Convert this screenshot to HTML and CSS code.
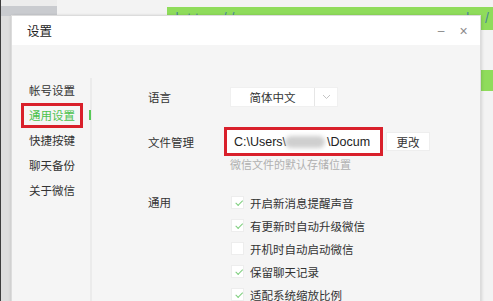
FILE: index.html
```html
<!DOCTYPE html>
<html lang="zh-CN">
<head>
<meta charset="utf-8">
<link rel="stylesheet" href="styles.css">
</head>
<body>
<div class="screen">
  <div class="bg">
    <div class="bg-dark"></div>
    <div class="bg-left"><div class="bg-left-top"></div><div class="bg-left-bar"></div></div>
    <div class="bg-right">
      <div class="green-bar"><span class="url">http://www.xxxxxxxxxxxxxx.edu/</span></div>
      <div class="green-bar2"><span>/ev</span></div>
    </div>
  </div>

  <div class="dialog">
    <div class="titlebar">
      <span class="title">设置</span>
      <span class="controls"><span class="min">–</span><span class="close">×</span></span>
    </div>
    <div class="dbody">
      <ul class="nav">
        <li class="nav-item">帐号设置</li>
        <li class="nav-item active">通用设置</li>
        <li class="nav-item">快捷按键</li>
        <li class="nav-item">聊天备份</li>
        <li class="nav-item">关于微信</li>
      </ul>
      <div class="content">
        <div class="row row-lang">
          <div class="label">语言</div>
          <div class="select">
            <span class="select-val">简体中文</span>
            <span class="select-arrow"><svg width="9" height="6" viewBox="0 0 9 6"><path d="M1 1l3.5 3.5L8 1" fill="none" stroke="#c4c4c4" stroke-width="1"/></svg></span>
          </div>
        </div>
        <div class="row row-file">
          <div class="label">文件管理</div>
          <div class="path"><span>C:\Users\</span><span class="blur"></span><span>\Docum</span></div>
          <button class="btn">更改</button>
        </div>
        <div class="hint">微信文件的默认存储位置</div>
        <div class="row row-general">
          <div class="label">通用</div>
          <div class="checks">
            <div class="check"><span class="box on"></span>开启新消息提醒声音</div>
            <div class="check"><span class="box on"></span>有更新时自动升级微信</div>
            <div class="check"><span class="box"></span>开机时自动启动微信</div>
            <div class="check"><span class="box on"></span>保留聊天记录</div>
            <div class="check"><span class="box on"></span>适配系统缩放比例</div>
          </div>
        </div>
      </div>
    </div>
  </div>
</div>
</body>
</html>
```
FILE: styles.css
```css
* { box-sizing: border-box; }
html, body { margin: 0; padding: 0; }
body {
  width: 493px; height: 301px; overflow: hidden;
  font-family: "Noto Sans CJK SC", "Liberation Sans", sans-serif;
  color: #333;
  background: #f3f3f3;
}
.screen { position: relative; width: 493px; height: 301px; overflow: hidden; }

.bg { display: flex; height: 301px; }
.bg-dark { width: 3px; background: #3d3d3d; }
.bg-left { width: 204px; background: #dedede; display: flex; flex-direction: column; }
.bg-left-top { height: 6px; background: #ececec; }
.bg-left-bar { height: 10px; background: #c9cbcf; }
.bg-right { flex: 1; background: #f3f3f3; display: flex; flex-direction: column; }
.green-bar {
  margin: 7px 0 0 110px; height: 23px; background: #8fdc5b;
  padding: 3px 0 0 8px; font-family: "Liberation Sans", sans-serif; font-size: 14px;
  color: #4a8a9a; white-space: nowrap; overflow: hidden; letter-spacing: 4px;
}
.green-bar2 {
  margin: 40px 0 0 273px; height: 21px; background: #8fdc5b;
  font-family: "Liberation Sans", sans-serif; font-size: 14px; color: #4a9aa8;
  padding: 2px 0 0 0; white-space: nowrap; overflow: hidden;
}
.green-bar2 span { margin-left: -4px; }

.dialog {
  position: absolute; left: 12px; top: 16px; width: 468px; height: 290px;
  background: #f5f5f5;
  box-shadow: 0 0 0 1px #dcdcdc, 2px 0 3px rgba(0,0,0,0.12), -1px 0 3px rgba(0,0,0,0.15);
  display: flex; flex-direction: column;
}
.titlebar {
  height: 29px; background: #fff; display: flex; align-items: center;
  justify-content: space-between; padding: 0 12px 0 15px;
}
.title { font-size: 12.5px; color: #222; }
.controls { display: flex; align-items: center; gap: 14px; color: #8a8a8a; font-family: "Liberation Sans", sans-serif; line-height: 14px; }
.min { font-size: 12px; width: 8px; text-align: center; }
.close { font-size: 14px; width: 9px; text-align: center; }

.dbody { flex: 1; display: flex; }
.nav {
  list-style: none; margin: 33px 0 0 0; padding: 0; width: 80px;
  border-right: 2px solid #ebebeb; position: relative; align-self: stretch;
}
.nav-item {
  height: 25px; line-height: 25px; font-size: 11.5px; padding-left: 17px; color: #333;
}
.nav-item.active {
  color: #4cc24c; margin-left: 9px; width: 62px; height: 25px;
  border: 3px solid #d9202b; padding-left: 5px; line-height: 19px;
  position: relative;
}
.nav-item.active::after {
  content: ""; position: absolute; right: -11px; top: 4px;
  width: 2px; height: 10px; background: #57c957;
}

.content { flex: 1; padding: 42px 0 0 56px; display: flex; flex-direction: column; }
.row { display: flex; align-items: center; }
.label { width: 82px; font-size: 11.5px; color: #333; }
.row-lang { height: 20px; }
.select {
  width: 108px; height: 20px; background: #fff; display: flex;
  border: 1px solid #f0f0f0;
}
.select-val { width: 84px; text-align: center; font-size: 11.5px; line-height: 18px; border-right: 1px solid #e6e6e6; }
.select-arrow { flex: 1; display: flex; align-items: center; justify-content: center; }

.row-file { margin-top: 20px; height: 29px; }
.row-file .label { width: 76px; }
.path {
  width: 159px; height: 29px; border: 3px solid #d9202b; background: #fff;
  padding: 0 2px 0 7px; display: flex; align-items: center; white-space: nowrap; overflow: hidden;
  font-family: "Liberation Sans", sans-serif; font-size: 12.5px; color: #222;
}
.path span { flex: none; }
.blur {
  width: 40px; height: 12px; margin: 0 2px 0 -1px; background: #cfcfcf;
  border-radius: 6px; filter: blur(2px);
}
.btn {
  margin-left: 3px; width: 44px; height: 19px; background: #fff; border: 1px solid #eeeeee;
  font-family: "Noto Sans CJK SC", sans-serif; font-size: 11.5px; color: #333; padding: 0;
}
.hint { margin: 1px 0 0 82px; font-size: 11px; color: #b0b0b0; line-height: 14px; }

.row-general { margin-top: 20px; align-items: flex-start; }
.row-general .label { line-height: 23px; }
.checks { display: flex; flex-direction: column; margin-left: 1px; }
.check { height: 23px; display: flex; align-items: center; font-size: 11.5px; color: #333; }
.box {
  width: 13px; height: 13px; background: #fff; border: 1px solid #ededed; margin-right: 6px;
  position: relative;
}
.box.on::after {
  content: ""; position: absolute; left: 3px; top: 1px; width: 6px; height: 3px;
  border-left: 1px solid #7fcf7f; border-bottom: 1px solid #7fcf7f;
  transform: rotate(-45deg) translate(-1px, 2px);
}
```
